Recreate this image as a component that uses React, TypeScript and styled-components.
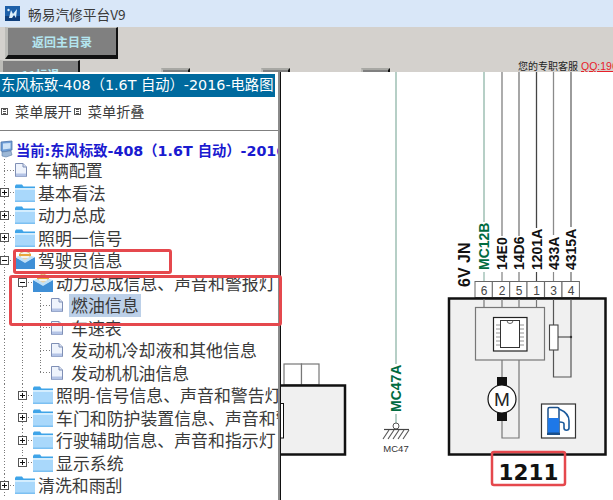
import styled, { createGlobalStyle } from "styled-components";

const CJK = `"Noto Sans CJK SC", "Liberation Sans", sans-serif`;
const LATIN_CJK = `"DejaVu Sans", "Noto Sans CJK SC", sans-serif`;

const GlobalStyle = createGlobalStyle`
  html, body {
    margin: 0;
    padding: 0;
    height: 100%;
    overflow: hidden;
    background: #ffffff;
  }
`;

const Page = styled.div`
  position: relative;
  width: 613px;
  height: 500px;
  overflow: hidden;
  display: flex;
  flex-direction: column;
  font-family: ${CJK};
  color: #333333;
`;

const TitleBar = styled.div`
  flex: none;
  height: 27px;
  background: #d9e7f8;
  display: flex;
  align-items: center;
  gap: 8px;
  padding-left: 5px;
  font-size: 13.7px;
  color: #3a3a3a;
`;

const Toolbar = styled.div`
  flex: none;
  height: 45px;
  overflow: hidden;
  background: #d4d1cd;
  display: flex;
  flex-direction: column;
`;

const ToolRowTop = styled.div`
  flex: none;
  height: 33px;
  padding-left: 5px;
`;

const ToolRowBottom = styled.div`
  flex: none;
  display: flex;
  align-items: flex-start;
  white-space: nowrap;
`;

const BevelButton = styled.div<{ $width: number; $height: number }>`
  box-sizing: border-box;
  flex: none;
  width: ${(p) => p.$width}px;
  height: ${(p) => p.$height}px;
  background: #808080;
  border-left: 3px solid #bcbcb8;
  border-top: 1px solid #c8c8c4;
  border-right: 2px solid #111111;
  border-bottom: 4px solid #111111;
  color: #b4e6f0;
  font-size: 12px;
  font-weight: 700;
  line-height: 28px;
  text-align: center;
`;

const BackButton = styled(BevelButton)`
  margin-right: 81px;
`;

const ToolGroup = styled.div`
  flex: none;
  width: 100px;
  display: flex;
  gap: 25px;
  padding-top: 8px;
  font-size: 14px;
  line-height: 20px;
  color: #333333;
`;

const SmallButton = styled.div`
  box-sizing: border-box;
  flex: none;
  width: 29px;
  height: 20px;
  background: #808080;
  border-left: 2px solid #bcbcb8;
  border-top: 2px solid #a8a8a4;
  border-right: 2px solid #111111;
`;

const Service = styled.div`
  flex: none;
  margin-left: 57px;
  margin-top: -2px;
  font-size: 10px;
  line-height: 15px;
  color: #222222;

  a {
    color: #e8202a;
    font-family: "Liberation Sans", sans-serif;
    font-size: 10.5px;
    text-decoration: underline;
    margin-left: 3px;
  }
`;

const Main = styled.div`
  flex: 1;
  min-height: 0;
  display: flex;
`;

const Sidebar = styled.div`
  flex: none;
  width: 278px;
  overflow: hidden;
  background: #ffffff;
  display: flex;
  flex-direction: column;
`;

const Splitter = styled.div`
  flex: none;
  box-sizing: border-box;
  width: 3px;
  background: #8a8a8a;
  border-right: 1px solid #111111;
`;

const Heading = styled.div`
  flex: none;
  box-sizing: border-box;
  width: 275px;
  height: 23px;
  margin-top: 2px;
  padding-left: 1px;
  background: #006a9e;
  color: #ffffff;
  font-family: ${LATIN_CJK};
  font-size: 14.3px;
  line-height: 23px;
  white-space: nowrap;
  overflow: hidden;
`;

const MenuRow = styled.div`
  flex: none;
  box-sizing: border-box;
  height: 34px;
  padding: 0 0 5px 1px;
  border-bottom: 1px solid #808080;
  display: flex;
  align-items: center;
  font-size: 14.2px;
  color: #3c3c3c;
`;

const MenuItem = styled.div<{ $gap: number }>`
  display: flex;
  align-items: center;
  gap: 7px;
  margin-right: ${(p) => p.$gap}px;
`;

const MenuGlyph = styled.span`
  box-sizing: border-box;
  display: block;
  width: 7px;
  height: 7px;
  border: 1px solid #555555;
  background:
    linear-gradient(#555555, #555555) center 0 / 3px 1px no-repeat,
    linear-gradient(#555555, #555555) center 2px / 3px 1px no-repeat,
    linear-gradient(#555555, #555555) center 4px / 3px 1px no-repeat;
`;

const CurrentRow = styled.div`
  flex: none;
  height: 20px;
  margin-top: 8px;
  display: flex;
  align-items: center;
  gap: 3px;
  white-space: nowrap;
  overflow: hidden;
  color: #1a1ad0;
  font-family: ${LATIN_CJK};
  font-size: 14.3px;
  font-weight: 700;

  svg {
    flex: none;
  }
`;

const TreeList = styled.div`
  flex: none;
  display: flex;
  flex-direction: column;
`;

const Row = styled.div`
  flex: none;
  height: 22.5px;
  display: flex;
  align-items: stretch;
  white-space: nowrap;
  font-size: 16.9px;
  color: #3a3a3a;
`;

const dotsV = `repeating-linear-gradient(to bottom, #7a7a7a 0 1px, transparent 1px 3px)`;
const dotsH = `repeating-linear-gradient(to right, #7a7a7a 0 1px, transparent 1px 3px)`;

const Indent = styled.div<{ $line: boolean }>`
  flex: none;
  width: 18px;
  background: ${(p) => (p.$line ? `${dotsV} 4px 0 / 1px 100% no-repeat` : "none")};
`;

const Joint = styled.div<{ $last: boolean }>`
  flex: none;
  width: 15px;
  display: flex;
  align-items: center;
  background:
    ${dotsH} 4px 50% / 11px 1px no-repeat,
    ${dotsV} 4px 0 / 1px ${(p) => (p.$last ? "50%" : "100%")} no-repeat;
`;

const Expander = styled.div<{ $open: boolean }>`
  box-sizing: border-box;
  width: 9px;
  height: 9px;
  margin-left: 0;
  border: 1px solid #555555;
  background:
    linear-gradient(#111111, #111111) center / 5px 1px no-repeat,
    ${(p) => (p.$open ? "none" : "linear-gradient(#111111, #111111) center / 1px 5px no-repeat")},
    #ffffff;
`;

const IconSlot = styled.div`
  flex: none;
  display: flex;
  align-items: center;
`;

const Label = styled.div<{ $gap: number; $selected?: boolean }>`
  margin-left: ${(p) => p.$gap}px;
  padding: 0 ${(p) => (p.$selected ? "2px" : "0")};
  line-height: 22.5px;
  background: ${(p) => (p.$selected ? "#bcd0e8" : "transparent")};
`;

const Canvas = styled.div`
  flex: 1;
  min-width: 0;
  background: #ffffff;
  overflow: hidden;

  svg {
    display: block;
  }
`;

const Callout = styled.div<{ $x: number; $y: number; $w: number; $h: number }>`
  position: absolute;
  box-sizing: border-box;
  left: ${(p) => p.$x}px;
  top: ${(p) => p.$y}px;
  width: ${(p) => p.$w}px;
  height: ${(p) => p.$h}px;
  border: 3px solid #e5484d;
  border-radius: 3px;
  pointer-events: none;
`;

const AppLogo = () => (
  <svg width="15" height="15" viewBox="0 0 15 15">
    <rect width="15" height="15" fill="#1c5fa8" />
    <rect x="0" y="10" width="15" height="5" fill="#0f3f7c" />
    <path d="M4 12 L6 4 L8 8 L12 3 L11 12 L9 9 L7 12 Z" fill="#dff0fa" />
    <circle cx="3.5" cy="4" r="1.2" fill="#dff0fa" />
  </svg>
);

const ComputerIcon = () => (
  <svg width="13" height="18" viewBox="0 0 13 18">
    <path d="M1 2 L12 1 L12 10 L4 12 L1 11 Z" fill="#6f9fd8" stroke="#4d74a8" strokeWidth="0.8" />
    <path d="M3 3.5 L10.5 3 L10.5 8.5 L3 9.5 Z" fill="#cfe4f8" />
    <path d="M2 12 L11 11 L12 15 L6 17 L2 16 Z" fill="#9db8d6" stroke="#5c7ea8" strokeWidth="0.6" />
  </svg>
);

const FolderIcon = () => (
  <svg width="20" height="18" viewBox="0 0 20 18">
    <path d="M0 2 L1 0.5 L7 0.5 L8.5 2.5 L20 2.5 L20 5 L0 5 Z" fill="#3fa4e8" />
    <rect x="0" y="4" width="20" height="14" fill="#a9d8fb" />
    <rect x="0" y="4" width="20" height="2" fill="#d3edfe" />
    <rect x="0" y="16.5" width="20" height="1.5" fill="#7cc0f2" />
  </svg>
);

const OpenFolderIcon = () => (
  <svg width="20" height="18" viewBox="0 0 20 18">
    <path d="M5 2 L10 0 L15 2 L15 8 L5 8 Z" fill="#f4f2ea" stroke="#d6a24a" strokeWidth="0.8" />
    <rect x="4" y="3" width="12" height="2" fill="#e8a63c" />
    <path d="M0 6 L10 11 L20 6 L20 18 L0 18 Z" fill="#3f8fd6" />
    <path d="M0 6 L4 5 L10 9 L16 5 L20 6 L10 12 Z" fill="#bfe0f8" />
  </svg>
);

const DocIcon = () => (
  <svg width="12" height="14" viewBox="0 0 12 14">
    <path d="M0.5 0.5 L8 0.5 L11.5 4 L11.5 13.5 L0.5 13.5 Z" fill="#eef3fc" stroke="#7f8fb5" />
    <path d="M8 0.5 L8 4 L11.5 4" fill="#d6dff2" stroke="#7f8fb5" />
    <rect x="1" y="10.5" width="10" height="3" fill="#b4c4e6" />
  </svg>
);

type Kind = "folder" | "open" | "doc";

type Node = {
  text: string;
  level: number;
  kind: Kind;
  guides: boolean[];
  last?: boolean;
  selected?: boolean;
};

const rows: Node[] = [
  { text: "车辆配置", level: 0, kind: "doc", guides: [] },
  { text: "基本看法", level: 0, kind: "folder", guides: [] },
  { text: "动力总成", level: 0, kind: "folder", guides: [] },
  { text: "照明一信号", level: 0, kind: "folder", guides: [] },
  { text: "驾驶员信息", level: 0, kind: "open", guides: [] },
  { text: "动力总成信息、声音和警报灯", level: 1, kind: "open", guides: [true] },
  { text: "燃油信息", level: 2, kind: "doc", guides: [true, true], selected: true },
  { text: "车速表", level: 2, kind: "doc", guides: [true, true] },
  { text: "发动机冷却液和其他信息", level: 2, kind: "doc", guides: [true, true] },
  { text: "发动机机油信息", level: 2, kind: "doc", guides: [true, true], last: true },
  { text: "照明-信号信息、声音和警告灯", level: 1, kind: "folder", guides: [true] },
  { text: "车门和防护装置信息、声音和警报灯", level: 1, kind: "folder", guides: [true] },
  { text: "行驶辅助信息、声音和指示灯", level: 1, kind: "folder", guides: [true] },
  { text: "显示系统", level: 1, kind: "folder", guides: [true], last: true },
  { text: "清洗和雨刮", level: 0, kind: "folder", guides: [] },
];

const TreeRow = ({ node }: { node: Node }) => (
  <Row>
    {node.guides.map((line, i) => (
      <Indent key={i} $line={line} />
    ))}
    <Joint $last={!!node.last}>
      {node.kind !== "doc" && <Expander $open={node.kind === "open"} />}
    </Joint>
    <IconSlot>
      {node.kind === "doc" && <DocIcon />}
      {node.kind === "folder" && <FolderIcon />}
      {node.kind === "open" && <OpenFolderIcon />}
    </IconSlot>
    <Label $gap={node.kind === "doc" ? (node.selected ? 6 : 8) : 3} $selected={node.selected}>
      {node.text}
    </Label>
  </Row>
);

const labelFont = "Liberation Sans, sans-serif";

const WireLabel = ({ x, text, color }: { x: number; text: string; color: string }) => (
  <text
    transform={`translate(${x + 5} 270) rotate(-90)`}
    fontFamily={labelFont}
    fontSize="14"
    fontWeight="700"
    fill={color}
  >
    {text}
  </text>
);

const wires = [
  { x: 484, label: "MC12B", top: 224, pin: "6", color: "#006b3f", line: "#8fb5a8" },
  { x: 502, label: "14E0", top: 238, pin: "2", color: "#111111", line: "#808080" },
  { x: 519, label: "14D6", top: 238, pin: "5", color: "#111111", line: "#777777" },
  { x: 536.5, label: "1201A", top: 230, pin: "1", color: "#111111", line: "#444444" },
  { x: 553.5, label: "433A", top: 237, pin: "3", color: "#111111", line: "#8a8a8a" },
  { x: 571, label: "4315A", top: 229, pin: "4", color: "#111111", line: "#666666" },
];

const pinXs = [475, 492.3, 509.7, 527, 544.6, 562];

const Diagram = () => (
  <svg width="332" height="428" viewBox="281 72 332 428">
    {wires.map((w) => (
      <line key={w.x} x1={w.x} y1="72" x2={w.x} y2={w.top - 2} stroke={w.line} strokeWidth="1.3" />
    ))}
    {wires.map((w) => (
      <line key={w.x} x1={w.x} y1="272" x2={w.x} y2="282" stroke={w.line} strokeWidth="1.2" />
    ))}
    {wires.map((w) => (
      <WireLabel key={w.x} x={w.x} text={w.label} color={w.color} />
    ))}
    <text
      transform="translate(470 287) rotate(-90)"
      fontFamily={labelFont}
      fontSize="16"
      fontWeight="700"
      fill="#111111"
    >
      6V JN
    </text>

    {wires.map((w, i) => (
      <g key={w.pin}>
        <rect x={pinXs[i]} y="281.5" width="17.4" height="16" fill="#ffffff" stroke="#666666" strokeWidth="1" />
        <text x={w.x} y="294.5" textAnchor="middle" fontFamily={labelFont} fontSize="12" fill="#444444">
          {w.pin}
        </text>
      </g>
    ))}

    <rect x="449" y="298.5" width="156.5" height="156" fill="#f0f0f0" stroke="#111111" strokeWidth="2.5" />

    <g stroke="#777777" strokeWidth="1.2" fill="none">
      <rect x="475.5" y="307.5" width="69" height="52.5" />
      <line x1="484" y1="299" x2="484" y2="307" />
      <line x1="502" y1="299" x2="502" y2="307" />
      <line x1="519" y1="299" x2="519" y2="307" />
      <line x1="536.5" y1="299" x2="536.5" y2="307" />
      <path d="M502 360 V377 M502 421 V438 H519 V360" />
      <path d="M553.5 299 V325 M553.5 350 V377 H571 V299" stroke="#555555" />
    </g>

    <rect x="493.5" y="317.5" width="33.5" height="33.5" fill="#ffffff" stroke="#222222" strokeWidth="1.2" />
    <g stroke="#888888" strokeWidth="0.9">
      {[325, 329, 333, 337, 341, 345].map((y) => (
        <g key={y}>
          <line x1="496" y1={y} x2="501" y2={y} />
          <line x1="519" y1={y} x2="524" y2={y} />
        </g>
      ))}
    </g>
    <rect x="500.5" y="320.5" width="19" height="27" fill="#ffffff" stroke="#333333" strokeWidth="1" />
    <path d="M507 320.5 A3 3 0 0 0 513 320.5" fill="none" stroke="#555555" strokeWidth="0.9" />

    <rect x="549.5" y="325" width="8.5" height="25" fill="#ffffff" stroke="#444444" strokeWidth="1.1" />
    <line x1="558" y1="337" x2="571" y2="337" stroke="#333333" strokeWidth="1" />
    <circle cx="571" cy="337" r="1.2" fill="#333333" />

    <rect x="497" y="377" width="10" height="9" fill="#111111" />
    <rect x="497" y="412" width="10" height="9" fill="#111111" />
    <circle cx="502" cy="399" r="14" fill="#ffffff" stroke="#111111" strokeWidth="1.2" />
    <text x="502" y="406" textAnchor="middle" fontFamily={labelFont} fontSize="19" fill="#222222">
      M
    </text>

    <rect x="541.5" y="404" width="34" height="34" fill="#ffffff" stroke="#333333" strokeWidth="1.2" />
    <rect x="548" y="407.5" width="11" height="26" rx="1.5" fill="#ffffff" stroke="#1a4f8a" strokeWidth="1.5" />
    <rect x="548" y="418" width="11" height="15.5" fill="#1e78e8" />
    <rect x="547" y="432.5" width="13" height="2.5" fill="#1a4f8a" />
    <path
      d="M559 409 C564 411 569 415 569 421 L569 428 C569 431 564 431 564 428 L564 424 C564 422 562 422 559.5 422"
      fill="none"
      stroke="#1a5a9c"
      strokeWidth="1.6"
    />

    <rect x="492" y="452" width="73" height="33" rx="2" fill="none" stroke="#e5484d" strokeWidth="2.5" />
    <text x="528.5" y="480" textAnchor="middle" fontFamily="DejaVu Sans, sans-serif" fontSize="21.5" fontWeight="700" fill="#111111">
      1211
    </text>

    <rect x="284" y="364" width="17.5" height="21" fill="#ffffff" stroke="#777777" strokeWidth="1.2" />
    <rect x="301.5" y="364" width="17.5" height="21" fill="#ffffff" stroke="#777777" strokeWidth="1.2" />
    <rect x="270" y="385.5" width="75" height="69" fill="#f0f0f0" stroke="#111111" strokeWidth="2.5" />
    <rect x="275" y="403.5" width="8.5" height="34.5" fill="#ffffff" stroke="#111111" strokeWidth="1" />

    <line x1="396" y1="72" x2="396" y2="364" stroke="#8fb5a8" strokeWidth="1.3" />
    <line x1="396" y1="414" x2="396" y2="423" stroke="#8fb5a8" strokeWidth="1.3" />
    <text
      transform="translate(401 412) rotate(-90)"
      fontFamily={labelFont}
      fontSize="14"
      fontWeight="700"
      fill="#006b3f"
    >
      MC47A
    </text>
    <circle cx="396" cy="426" r="3" fill="#ffffff" stroke="#555555" strokeWidth="1" />
    <line x1="384" y1="429.5" x2="409" y2="429.5" stroke="#444444" strokeWidth="1.2" />
    <g stroke="#555555" strokeWidth="1.1">
      {[386, 391, 396, 401, 406].map((x) => (
        <line key={x} x1={x + 3} y1="430" x2={x - 3} y2="439" />
      ))}
    </g>
    <text x="396" y="452" textAnchor="middle" fontFamily={labelFont} fontSize="9.5" fill="#333333">
      MC47
    </text>
  </svg>
);

export default function App() {
  return (
    <Page>
      <GlobalStyle />
      <TitleBar>
        <AppLogo />
        畅易汽修平台V9
      </TitleBar>
      <Toolbar>
        <ToolRowTop>
          <BevelButton $width={113} $height={32}>返回主目录</BevelButton>
        </ToolRowTop>
        <ToolRowBottom>
          <BackButton $width={80} $height={32}>11标退</BackButton>
          <ToolGroup>
            <SmallButton />
            全屏
          </ToolGroup>
          <ToolGroup>
            <SmallButton />
            删除
          </ToolGroup>
          <ToolGroup>
            <SmallButton />
            全屏
          </ToolGroup>
          <Service>
            您的专职客服<a>QQ:1967382610</a>
          </Service>
        </ToolRowBottom>
      </Toolbar>
      <Main>
        <Sidebar>
          <Heading>东风标致-408（1.6T 自动）-2016-电路图</Heading>
          <MenuRow>
            <MenuItem $gap={2}>
              <MenuGlyph />
              菜单展开
            </MenuItem>
            <MenuItem $gap={0}>
              <MenuGlyph />
              菜单折叠
            </MenuItem>
          </MenuRow>
          <CurrentRow>
            <ComputerIcon />
            当前:东风标致-408（1.6T 自动）-2016-电路图
          </CurrentRow>
          <TreeList>
            {rows.map((node) => (
              <TreeRow key={node.text} node={node} />
            ))}
          </TreeList>
        </Sidebar>
        <Splitter />
        <Canvas>
          <Diagram />
        </Canvas>
      </Main>
      <Callout $x={13} $y={249} $w={159} $h={25} />
      <Callout $x={9} $y={275} $w={273} $h={51} />
    </Page>
  );
}
